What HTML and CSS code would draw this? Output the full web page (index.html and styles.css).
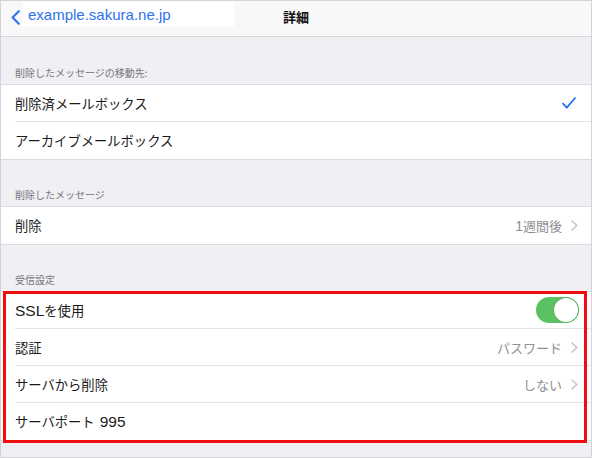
FILE: index.html
```html
<!DOCTYPE html>
<html lang="ja">
<head>
<meta charset="utf-8">
<title>詳細</title>
<link rel="stylesheet" href="styles.css">
</head>
<body>
<div class="frame">
  <header class="nav">
    <a class="back">
      <svg class="back-icon" width="9" height="15" viewBox="0 0 9 15"><path d="M7.8 1.2 L1.6 7.5 L7.8 13.8" fill="none" stroke="#2f72ee" stroke-width="2.1" stroke-linecap="round" stroke-linejoin="round"/></svg>
      <span class="back-label">example.sakura.ne.jp</span>
    </a>
    <h1 class="title">詳細</h1>
    <span></span>
  </header>

  <div class="group-header">削除したメッセージの移動先:</div>
  <ul class="list">
    <li class="row"><div class="row-inner"><span class="label">削除済メールボックス</span>
      <svg class="check" width="14" height="12" viewBox="0 0 14 12"><path d="M1 6.6 L4.8 10.6 L13 1" fill="none" stroke="#1f6ff0" stroke-width="1.7" stroke-linecap="round" stroke-linejoin="round"/></svg></div></li>
    <li class="row"><div class="row-inner"><span class="label">アーカイブメールボックス</span></div></li>
  </ul>

  <div class="group-header gh2">削除したメッセージ</div>
  <ul class="list">
    <li class="row"><div class="row-inner"><span class="label">削除</span>
      <span class="value"><span class="lat-v">1</span>週間後</span>
      <svg class="chev" width="7" height="11" viewBox="0 0 7 11"><path d="M1 1 L5.8 5.5 L1 10" fill="none" stroke="#c3c3c8" stroke-width="1.5" stroke-linecap="round" stroke-linejoin="round"/></svg></div></li>
  </ul>

  <div class="group-header gh2">受信設定</div>
  <div class="highlight">
    <ul class="list">
      <li class="row"><div class="row-inner"><span class="label"><span class="lat">SSL</span>を使用</span>
        <span class="toggle"><span class="knob"></span></span></div></li>
      <li class="row"><div class="row-inner"><span class="label">認証</span>
        <span class="value">パスワード</span>
        <svg class="chev" width="7" height="11" viewBox="0 0 7 11"><path d="M1 1 L5.8 5.5 L1 10" fill="none" stroke="#c3c3c8" stroke-width="1.5" stroke-linecap="round" stroke-linejoin="round"/></svg></div></li>
      <li class="row"><div class="row-inner"><span class="label">サーバから削除</span>
        <span class="value">しない</span>
        <svg class="chev" width="7" height="11" viewBox="0 0 7 11"><path d="M1 1 L5.8 5.5 L1 10" fill="none" stroke="#c3c3c8" stroke-width="1.5" stroke-linecap="round" stroke-linejoin="round"/></svg></div></li>
      <li class="row"><div class="row-inner"><span class="label">サーバポート<span class="lat port">995</span></span></div></li>
    </ul>
  </div>
</div>
</body>
</html>
```

FILE: styles.css
```css
* { box-sizing: border-box; }
html, body { margin: 0; padding: 0; }
body {
  font-family: "Noto Sans CJK JP", "Noto Sans", sans-serif;
  background: #ffffff;
}
.frame {
  width: 592px;
  height: 458px;
  border: 1px solid #d4d4d8;
  background: #efeff4;
  overflow: hidden;
}
.nav {
  height: 36px;
  background: #f8f8f9;
  border-bottom: 1px solid #d6d6da;
  display: grid;
  grid-template-columns: 1fr auto 1fr;
  align-items: start;
}
.back {
  display: flex;
  align-items: flex-start;
  padding-left: 10px;
}
.back-icon { margin-top: 9px; flex: none; }
.back-label {
  margin-left: 3px;
  width: 211px;
  height: 26px;
  background: #ffffff;
  padding-left: 5px;
  font-family: "Liberation Sans", Arial, sans-serif;
  font-size: 15px;
  line-height: 26px;
  padding-top: 1px;
  color: #2f72ee;
}
.title {
  margin: 0;
  font-size: 13px;
  font-weight: bold;
  line-height: 16px;
  padding-top: 8px;
  color: #111;
}
.group-header {
  height: 47px;
  display: flex;
  align-items: flex-end;
  padding: 0 14px 5px;
  font-size: 10px;
  line-height: 13px;
  color: #75757a;
}
.gh2 { height: 46px; }
.list {
  list-style: none;
  margin: 0;
  padding: 0;
  background: #ffffff;
  border-top: 1px solid #dcdce0;
  border-bottom: 1px solid #dcdce0;
}
.row { padding-left: 14px; }
.row-inner {
  height: 37px;
  display: flex;
  align-items: center;
  padding-right: 13px;
  border-bottom: 1px solid #e2e2e6;
}
.row:last-child .row-inner { border-bottom: none; }
.label {
  flex: 1;
  font-size: 13.3px;
  color: #1a1a1a;
  white-space: nowrap;
}
.lat {
  font-family: "Liberation Sans", Arial, sans-serif;
  font-size: 15.5px;
}
.port { margin-left: 5px; }
.value {
  font-size: 13px;
  color: #8e8e93;
  margin-right: 9px;
}
.lat-v {
  font-family: "Liberation Sans", Arial, sans-serif;
  font-size: 14px;
}
.chev { flex: none; }
.check { margin-right: 2px; flex: none; }
.toggle {
  width: 43px;
  height: 26px;
  border-radius: 13px;
  background: #5cc162;
  display: flex;
  justify-content: flex-end;
  align-items: center;
  padding-right: 1px;
  margin-right: -1px;
}
.knob {
  width: 24px;
  height: 24px;
  border-radius: 50%;
  background: #ffffff;
  box-shadow: 0 0 0 0.5px rgba(40, 120, 40, 0.5);
}
.highlight { position: relative; }
.highlight::after {
  content: "";
  position: absolute;
  left: 2px;
  right: 4px;
  top: 0;
  bottom: -2px;
  border: 3px solid #ee1010;
  pointer-events: none;
}
```
